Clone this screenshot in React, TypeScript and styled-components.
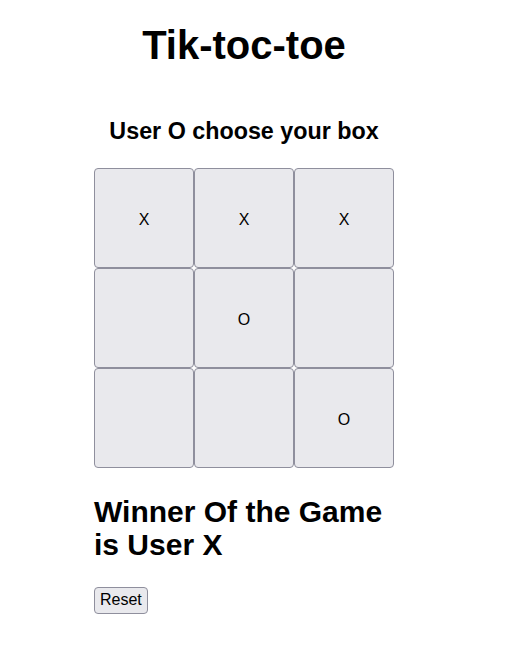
import { useState } from "react";
import styled, { createGlobalStyle } from "styled-components";

type Cell = "X" | "O" | "";

const GlobalStyle = createGlobalStyle`
  body {
    margin: 0;
    background: #ffffff;
    font-family: "Liberation Sans", Arial, Helvetica, sans-serif;
    color: #000000;
  }
`;

const startBoard: Cell[] = ["X", "X", "X", "", "O", "", "", "", "O"];

export default function App() {
  const [board, setBoard] = useState<Cell[]>(startBoard);
  const [winner, setWinner] = useState<string>("X");

  return (
    <>
      <GlobalStyle />
      <Page>
        <Title>Tik-toc-toe</Title>
        <Turn>User O choose your box</Turn>
        <Board>
          {board.map((cell, i) => (
            <Box key={i} type="button">
              {cell}
            </Box>
          ))}
        </Board>
        {winner && (
          <Winner>
            Winner Of the Game
            <br />
            is User {winner}
          </Winner>
        )}
        <ResetBtn
          type="button"
          onClick={() => {
            setBoard(["", "", "", "", "", "", "", "", ""]);
            setWinner("");
          }}
        >
          Reset
        </ResetBtn>
      </Page>
    </>
  );
}

const Page = styled.div`
  width: 300px;
  margin-left: 94px;
  display: flex;
  flex-direction: column;
  align-items: flex-start;
`;

const Title = styled.h1`
  align-self: stretch;
  margin: 22px 0 0;
  font-size: 40px;
  line-height: 46px;
  font-weight: 700;
  text-align: center;
`;

const Turn = styled.h3`
  align-self: stretch;
  margin: 50px 0 0;
  font-size: 23.3px;
  line-height: 26px;
  font-weight: 700;
  text-align: center;
`;

const Board = styled.div`
  margin-top: 24px;
  display: grid;
  grid-template-columns: repeat(3, 100px);
  grid-template-rows: repeat(3, 100px);
`;

const Box = styled.button`
  width: 100px;
  height: 100px;
  margin: 0;
  padding: 3px 0 0;
  background: #e9e9ed;
  border: 1px solid #8f8f9d;
  border-radius: 4px;
  font-family: "Liberation Sans", Arial, sans-serif;
  font-size: 16px;
  color: #000000;
`;

const Winner = styled.h2`
  margin: 27px 0 0;
  font-size: 30px;
  line-height: 33px;
  font-weight: 700;
`;

const ResetBtn = styled.button`
  margin-top: 26px;
  padding: 3px 5px 4px;
  background: #e9e9ed;
  border: 1px solid #8f8f9d;
  border-radius: 4px;
  font-family: "Liberation Sans", Arial, sans-serif;
  font-size: 16px;
  line-height: 18px;
  color: #000000;
`;
